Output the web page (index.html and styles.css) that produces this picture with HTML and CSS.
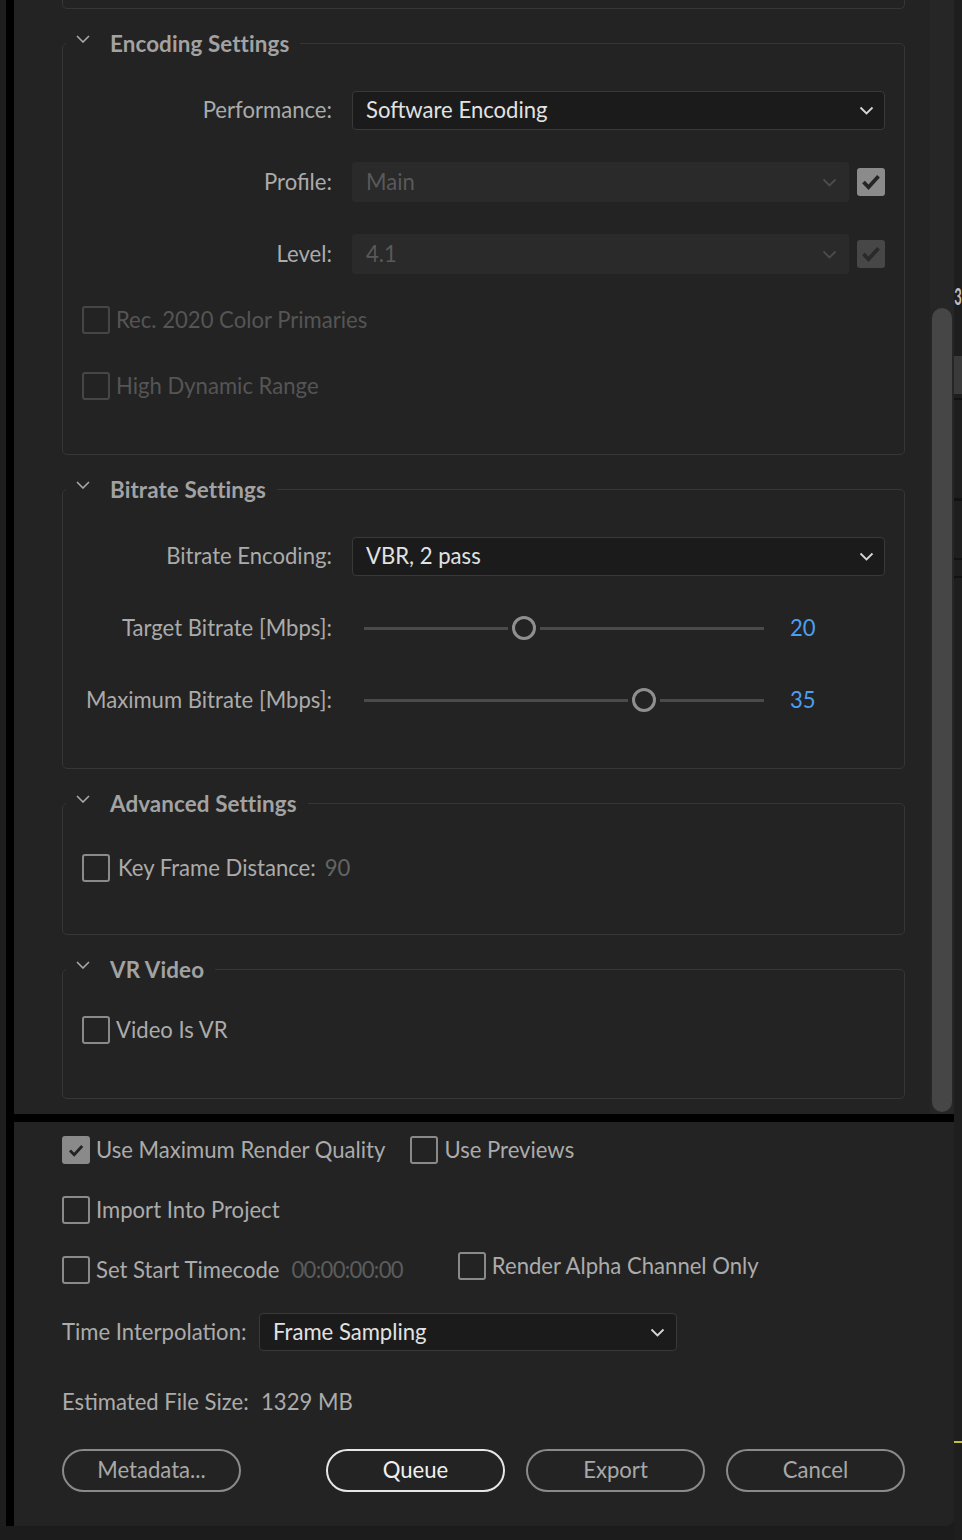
FILE: index.html
```html
<!DOCTYPE html>
<html lang="en">
<head>
<meta charset="utf-8">
<title>Export Settings</title>
<link rel="stylesheet" href="styles.css">
</head>
<body>
<div class="screen">
  <div class="edge-left"></div>
  <div class="dialog">
    <div class="scroll-area">
      <div class="scroll-content">
        <div class="prev-box"></div>

        <fieldset class="group group-encoding">
          <legend class="group-title"><span class="group-title-inner"><svg class="chev" width="14" height="8" viewBox="0 0 14 8"><path d="M1 1l6 6 6-6" fill="none" stroke="#a8a8a8" stroke-width="1.6"/></svg><span class="group-name">Encoding Settings</span></span></legend>
          <div class="form-grid">
            <span class="field-label">Performance:</span>
            <div class="select"><span class="select-text">Software Encoding</span><svg class="select-chev" width="15" height="9" viewBox="0 0 15 9"><path d="M1.5 1.5l6 6 6-6" fill="none" stroke="#d6d6d6" stroke-width="1.8"/></svg></div>

            <span class="field-label">Profile:</span>
            <div class="control-pair">
              <div class="select select-disabled"><span class="select-text">Main</span><svg class="select-chev" width="15" height="9" viewBox="0 0 15 9"><path d="M1.5 1.5l6 6 6-6" fill="none" stroke="#4c4c4c" stroke-width="1.8"/></svg></div>
              <span class="mini-check"><svg width="20" height="16" viewBox="0 0 20 16"><path d="M2.5 8l5 5.2 10-11" fill="none" stroke="#252525" stroke-width="3.8"/></svg></span>
            </div>

            <span class="field-label">Level:</span>
            <div class="control-pair">
              <div class="select select-disabled"><span class="select-text">4.1</span><svg class="select-chev" width="15" height="9" viewBox="0 0 15 9"><path d="M1.5 1.5l6 6 6-6" fill="none" stroke="#4c4c4c" stroke-width="1.8"/></svg></div>
              <span class="mini-check mini-check-dim"><svg width="20" height="16" viewBox="0 0 20 16"><path d="M2.5 8l5 5.2 10-11" fill="none" stroke="#2a2a2a" stroke-width="3.8"/></svg></span>
            </div>
          </div>
          <div class="check-list">
            <div class="check is-disabled"><span class="checkbox"></span><span class="check-text">Rec. 2020 Color Primaries</span></div>
            <div class="check is-disabled"><span class="checkbox"></span><span class="check-text">High Dynamic Range</span></div>
          </div>
        </fieldset>

        <fieldset class="group group-bitrate">
          <legend class="group-title"><span class="group-title-inner"><svg class="chev" width="14" height="8" viewBox="0 0 14 8"><path d="M1 1l6 6 6-6" fill="none" stroke="#a8a8a8" stroke-width="1.6"/></svg><span class="group-name">Bitrate Settings</span></span></legend>
          <div class="form-grid">
            <span class="field-label">Bitrate Encoding:</span>
            <div class="select"><span class="select-text">VBR, 2 pass</span><svg class="select-chev" width="15" height="9" viewBox="0 0 15 9"><path d="M1.5 1.5l6 6 6-6" fill="none" stroke="#d6d6d6" stroke-width="1.8"/></svg></div>

            <span class="field-label">Target Bitrate [Mbps]:</span>
            <div class="slider">
              <div class="track"><span class="thumb" style="left: 40%"></span></div>
              <span class="slider-value">20</span>
            </div>

            <span class="field-label">Maximum Bitrate [Mbps]:</span>
            <div class="slider">
              <div class="track"><span class="thumb" style="left: 70%"></span></div>
              <span class="slider-value">35</span>
            </div>
          </div>
        </fieldset>

        <fieldset class="group group-advanced">
          <legend class="group-title"><span class="group-title-inner"><svg class="chev" width="14" height="8" viewBox="0 0 14 8"><path d="M1 1l6 6 6-6" fill="none" stroke="#a8a8a8" stroke-width="1.6"/></svg><span class="group-name">Advanced Settings</span></span></legend>
          <div class="check-list">
            <div class="check check-wide"><span class="checkbox"></span><span class="check-text">Key Frame Distance:</span><span class="check-text muted-value">90</span></div>
          </div>
        </fieldset>

        <fieldset class="group group-vr">
          <legend class="group-title"><span class="group-title-inner"><svg class="chev" width="14" height="8" viewBox="0 0 14 8"><path d="M1 1l6 6 6-6" fill="none" stroke="#a8a8a8" stroke-width="1.6"/></svg><span class="group-name">VR Video</span></span></legend>
          <div class="check-list">
            <div class="check"><span class="checkbox"></span><span class="check-text">Video Is VR</span></div>
          </div>
        </fieldset>
      </div>
      <div class="scrollbar"><div class="scrollbar-thumb"></div></div>
    </div>

    <div class="separator"></div>

    <div class="bottom-panel">
      <div class="opt-row">
        <div class="check"><span class="checkbox checkbox-on"><svg width="16" height="13" viewBox="0 0 16 13"><path d="M2 6.5l4.2 4.2 8-8.7" fill="none" stroke="#232323" stroke-width="2.8"/></svg></span><span class="check-text">Use Maximum Render Quality</span></div>
        <div class="check check-next"><span class="checkbox"></span><span class="check-text">Use Previews</span></div>
      </div>
      <div class="opt-row opt-row-gap">
        <div class="check"><span class="checkbox"></span><span class="check-text">Import Into Project</span></div>
      </div>
      <div class="opt-row opt-row-gap">
        <div class="check"><span class="checkbox"></span><span class="check-text">Set Start Timecode</span><span class="check-text timecode">00:00:00:00</span></div>
        <div class="check check-alpha"><span class="checkbox"></span><span class="check-text">Render Alpha Channel Only</span></div>
      </div>
      <div class="opt-row opt-row-time">
        <span class="inline-label">Time Interpolation:</span>
        <div class="select select-time"><span class="select-text">Frame Sampling</span><svg class="select-chev" width="15" height="9" viewBox="0 0 15 9"><path d="M1.5 1.5l6 6 6-6" fill="none" stroke="#d6d6d6" stroke-width="1.8"/></svg></div>
      </div>
      <div class="opt-row opt-row-est">
        <span class="inline-label inline-label-est">Estimated File Size:</span>
        <span class="inline-value">1329 MB</span>
      </div>
      <div class="btn-row">
        <button class="btn" type="button">Metadata...</button>
        <button class="btn btn-primary" type="button">Queue</button>
        <button class="btn" type="button">Export</button>
        <button class="btn" type="button">Cancel</button>
      </div>
    </div>
  </div>
  <div class="edge-right">
    <span class="peek-glyph">3</span>
    <span class="peek-block"></span>
    <span class="peek-line"></span>
    <span class="peek-line peek-line-2"></span>
    <span class="peek-line peek-line-3"></span>
    <span class="peek-line peek-line-4"></span>
    <span class="peek-yellow"></span>
  </div>
</div>
</body>
</html>
```

FILE: styles.css
```css
* { box-sizing: border-box; }

html, body {
  margin: 0;
  padding: 0;
}

body {
  background: #1c1c1c;
  font-family: Lato, "Open Sans", "DejaVu Sans", sans-serif;
  font-size: 22.1px;
  color: #ababab;
}

.screen {
  display: flex;
  width: 962px;
  height: 1540px;
  overflow: hidden;
}

.edge-left {
  width: 6px;
  height: 1526px;
  background: #1e1e1e;
}

.dialog {
  width: 948px;
  height: 1526px;
  display: flex;
  flex-direction: column;
  border-left: 8px solid #000;
}

.scroll-area {
  height: 1114px;
  display: flex;
  background: #232323;
}

.scroll-content {
  flex: 1;
  padding: 0 25px 0 48px;
}

.scrollbar {
  width: 24px;
  display: flex;
  padding: 308px 2px 2px;
  background: #262626;
}

.scrollbar-thumb {
  flex: 1;
  background: #464646;
  border-radius: 10px;
}

.prev-box {
  height: 9px;
  border: 1px solid #363636;
  border-top: none;
  border-radius: 0 0 5px 5px;
}

/* Groups */
.group {
  margin: 21px 0 0;
  padding: 0 0 48px;
  border: 1px solid #363636;
  border-radius: 5px;
  min-width: 0;
}

.group-title {
  margin-left: 3px;
  padding: 0 11px 0 0;
  height: 27px;
}

.group-title-inner {
  display: flex;
  align-items: center;
  height: 27px;
}

.chev {
  flex: none;
  margin: -9px 20px 0 10px;
}

.group-name {
  font-weight: 700;
  font-size: 22.4px;
  color: #a2a2a2;
  line-height: 27px;
  letter-spacing: 0.1px;
}

.form-grid {
  display: grid;
  grid-template-columns: 269px 1fr;
  grid-auto-rows: 40px;
  column-gap: 20px;
  row-gap: 32px;
  align-items: center;
  margin: 33px 19px 0 0;
}

.field-label {
  text-align: right;
  color: #ababab;
  white-space: nowrap;
  padding-bottom: 2px;
}

.select {
  display: flex;
  align-items: center;
  justify-content: space-between;
  height: 39px;
  padding: 0 10px 0 13px;
  background: #1b1b1b;
  border: 1px solid #393939;
  border-radius: 4px;
  color: #e2e2e2;
}

.select-text { padding-bottom: 2px; }

.select-chev { flex: none; }

.select-disabled {
  height: 40px;
  padding-right: 11px;
  background: #2a2a2a;
  border-color: #2a2a2a;
  border-radius: 3px;
  color: #595959;
}

.control-pair {
  display: flex;
  align-items: center;
  gap: 8px;
}

.control-pair .select { flex: 1; }

.mini-check {
  flex: none;
  display: flex;
  align-items: center;
  justify-content: center;
  width: 28px;
  height: 28px;
  border-radius: 3px;
  background: #8b8b8b;
}

.mini-check-dim { background: #474747; }

.check-list {
  display: flex;
  flex-direction: column;
  gap: 26px;
  margin-top: 26px;
  padding-left: 19px;
}

.check {
  display: flex;
  align-items: center;
  gap: 6px;
  height: 40px;
  white-space: nowrap;
}

.check-text { padding-bottom: 2px; }

.checkbox {
  flex: none;
  display: flex;
  align-items: center;
  justify-content: center;
  width: 28px;
  height: 28px;
  border: 2px solid #8a8a8a;
  border-radius: 3px;
}

.checkbox-on { background: #8a8a8a; }

.is-disabled { color: #555; }
.is-disabled .checkbox { border-color: #464646; }

.check-wide { gap: 8px; }

.muted-value {
  margin-left: 1px;
  color: #646464;
}

.group-advanced { padding-bottom: 46px; }
.group-advanced .check-list { margin-top: 31px; }
.group-vr .check-list { margin-top: 27px; }

/* Sliders */
.slider {
  display: flex;
  align-items: center;
  padding-left: 12px;
}

.track {
  position: relative;
  width: 400px;
  height: 3px;
  background: #4a4a4a;
}

.thumb {
  position: absolute;
  top: 50%;
  width: 24px;
  height: 24px;
  margin: -12px 0 0 -12px;
  border: 3px solid #8f8f8f;
  border-radius: 50%;
  background: #232323;
  box-shadow: 0 0 0 4px #232323;
}

.slider-value {
  margin-left: 26px;
  padding-bottom: 2px;
  color: #4b9ff0;
}

/* Bottom panel */
.separator {
  height: 8px;
  background: #000;
}

.bottom-panel {
  flex: 1;
  padding: 8px 0 0 48px;
  background: #232323;
  border-bottom-right-radius: 8px;
}

.opt-row {
  display: flex;
  align-items: center;
  height: 40px;
  white-space: nowrap;
}

.opt-row-gap { margin-top: 20px; }
.opt-row-time { margin-top: 22px; }
.opt-row-est { margin-top: 30px; }

.check-next { margin-left: 25px; }

.timecode {
  margin-left: 6px;
  letter-spacing: -0.7px;
  color: #5c5c5c;
}

.check-alpha {
  margin-left: 55px;
  margin-top: -8px;
}

.inline-label {
  width: 197px;
  flex: none;
  padding-bottom: 2px;
}

.inline-label-est { width: 199px; }

.inline-value { padding-bottom: 2px; }

.select-time {
  width: 418px;
  height: 38px;
  padding-right: 11px;
}

.btn-row {
  display: flex;
  margin-top: 27px;
}

.btn {
  width: 179px;
  height: 43px;
  padding: 0 0 2px;
  border: 2px solid #8a8a8a;
  border-radius: 22px;
  background: transparent;
  color: #a8a8a8;
  font: inherit;
}

.btn + .btn { margin-left: 21px; }
.btn-primary { color: #f0f0f0; border-color: #e6e6e6; }
.btn-row .btn-primary { margin-left: 85px; }

/* Right peek strip */
.edge-right {
  width: 8px;
  display: flex;
  flex-direction: column;
  background: #1e1e1e;
  overflow: hidden;
}

.peek-glyph {
  margin-top: 284px;
  height: 24px;
  width: 8px;
  font-weight: 700;
  font-size: 13px;
  line-height: 24px;
  text-align: center;
  color: #bdbdbd;
  transform: scaleY(1.7);
}

.peek-block {
  margin-top: 48px;
  height: 38px;
  background: #3a3a3a;
}

.peek-line {
  margin-top: 4px;
  height: 2px;
  background: #121212;
}

.peek-line-2 { margin-top: 98px; height: 3px; }
.peek-line-3 { margin-top: 57px; }
.peek-line-4 { margin-top: 16px; }

.peek-yellow {
  margin-top: 863px;
  height: 2px;
  background: #c9bd3c;
}
```
